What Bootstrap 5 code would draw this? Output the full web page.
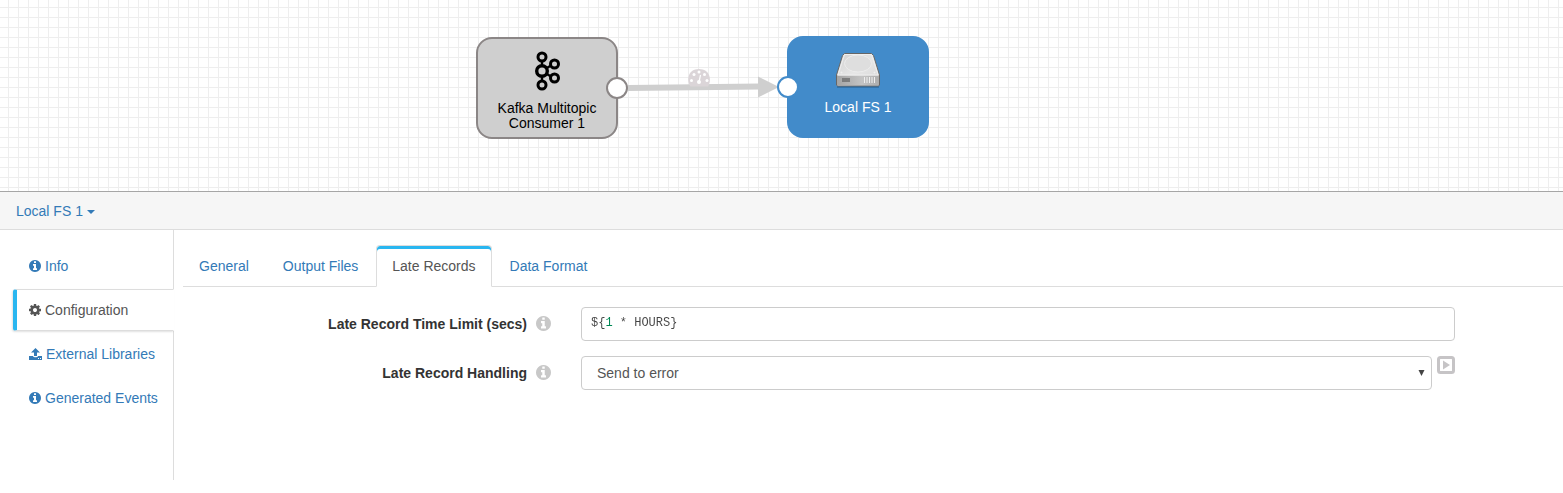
<!DOCTYPE html>
<html lang="en">
<head>
<meta charset="utf-8">
<meta name="viewport" content="width=device-width, initial-scale=1">
<title>Pipeline configuration</title>
<link href="https://cdn.jsdelivr.net/npm/bootstrap@5.3.0/dist/css/bootstrap.min.css" rel="stylesheet">
<style>
  body { font: 14px/20px "Liberation Sans", Arial, sans-serif; color: #333; background: #fff; }
  a { color: #337ab7; text-decoration: none; }

  /* Pipeline canvas */
  .canvas {
    height: 192px; border-bottom: 1px solid #a6a6a6;
    background-image: linear-gradient(90deg, #eee 1px, transparent 1px), linear-gradient(#eee 1px, transparent 1px);
    background-size: 10px 10px; background-position: 8px 7px;
  }
  .wire { left: 628px; top: 66px; }
  .stage { width: 142px; height: 102px; border-radius: 16px; border: 2px solid; line-height: 15px; padding: 12px 16px 0; font-size: 14px; }
  .stage svg { display: block; margin: 0 auto 10px; }
  .stage-kafka { left: 476px; top: 37px; background: #cfcfcf; border-color: #8b8686; color: #000; }
  .stage-fs { left: 787px; top: 36px; background: #428bca; border-color: #428bca; color: #fff; }
  .port { width: 22px; height: 22px; border-radius: 50%; background: #fff; border: 2px solid; border-color: inherit; top: 38px; }
  .port-out { right: -12px; }
  .port-in { left: -12px; }

  /* Detail pane */
  .pane-head { height: 38px; background: #f6f6f6; border-bottom: 1px solid #ddd; padding-left: 16px; }
  .pane-head .dropdown-toggle { color: #337ab7; font-size: 14px; line-height: 20px; }
  .pane-head .dropdown-toggle::after { margin-left: 4px; vertical-align: 2px; border-width: 4px 4px 0; }
  .pane-body { min-height: 250px; }
  .side { flex: 0 0 174px; padding: 15px 0 0 13px; box-shadow: inset -1px 0 #ddd; gap: 2px; }
  .side .nav-link { padding: 10px 12px; border: 1px solid transparent; border-left-width: 4px; color: #337ab7; white-space: nowrap; }
  .side .nav-link.active { color: #555; background: #fff; border-color: #ddd transparent #ddd #29b6f0; border-radius: 3px 0 0 3px; box-shadow: -1px 1px 2px rgba(0,0,0,.12); }
  .side svg { vertical-align: -1px; margin-right: 4px; }
  .content { padding-left: 9px; }
  .content .nav-tabs { margin-top: 15px; border-bottom: 1px solid #ddd; gap: 2px; }
  .content .nav-tabs .nav-link { padding: 10px 15px; border: 1px solid transparent; color: #337ab7; border-radius: 4px 4px 0 0; }
  .content .nav-tabs .nav-link.active { color: #555; border-color: #ddd #ddd #fff; box-shadow: inset 0 3px #29b6f0; }

  .settings { padding-top: 20px; display: grid; gap: 15px; }
  .setting { display: grid; grid-template-columns: 398fr 874fr 108fr; }
  .setting-name { padding-right: 30px; gap: 9px; }
  .hint { width: 15px; height: 15px; margin-bottom: 2px; color: #c8c8c8; }
  .settings .form-control, .settings .form-select { height: 34px; border: 1px solid #ccc; border-radius: 4px; font-size: 14px; line-height: 20px; }
  .settings .form-select {
    padding: 0 15px; color: #555; background-position: right 6px center; background-size: 7px 6px;
    background-image: url("data:image/svg+xml,%3Csvg xmlns='http://www.w3.org/2000/svg' viewBox='0 0 7 6'%3E%3Cpath fill='%23444' d='M.5 0h6L3.5 6z'/%3E%3C/svg%3E");
  }
  .choice { gap: 5px; }
  .editor { padding: 0 9px; }
  /* The third character is a number token */
  .editor input {
    width: 100%; height: 30px; padding: 0; border: 0; outline: 0;
    font: 12px/30px "Liberation Mono", monospace; color: transparent; caret-color: #333;
    background: linear-gradient(90deg, #444 2ch, #085 2ch 3ch, #444 3ch);
    -webkit-background-clip: text; background-clip: text;
  }
</style>
</head>
<body>
<svg class="d-none">
  <symbol id="i-info" viewBox="128 128 1536 1536"><path fill="currentColor" d="M1152 1376v-160q0-14-9-23t-23-9h-96v-512q0-14-9-23t-23-9h-320q-14 0-23 9t-9 23v160q0 14 9 23t23 9h96v320h-96q-14 0-23 9t-9 23v160q0 14 9 23t23 9h448q14 0 23-9t9-23zm-128-896v-160q0-14-9-23t-23-9h-192q-14 0-23 9t-9 23v160q0 14 9 23t23 9h192q14 0 23-9t9-23zm640 416q0 209-103 385.5t-279.5 279.5-385.5 103-385.5-103-279.5-279.5-103-385.5 103-385.5 279.5-279.5 385.5-103 385.5 103 279.5 279.5 103 385.5z"/></symbol>
</svg>

<main>
  <section class="canvas position-relative overflow-hidden" aria-label="Pipeline">
    <svg class="wire position-absolute" width="152" height="34" aria-hidden="true">
      <path d="M0 22 132 20.500" stroke="#cfcfcf" stroke-width="6"/>
      <path d="M130 10.500 151 21l-21 10.500z" fill="#cfcfcf"/>
      <path d="M62.500 20.500C58 14 60 3 71 3s13 11 9 17.500z" fill="#dbd5d8"/>
      <g fill="#fff"><circle cx="63.500" cy="14.500" r="1.500"/><circle cx="66" cy="8.500" r="1.500"/><circle cx="71" cy="6" r="1.500"/><circle cx="76.500" cy="8.500" r="1.500"/><circle cx="79" cy="14.500" r="1.500"/><circle cx="71" cy="16" r="2"/></g>
      <path d="M71 16l1.500-7" stroke="#fff" stroke-width="1.200"/>
    </svg>

    <div class="stage stage-kafka position-absolute text-center">
      <svg width="26" height="40" viewBox="0 0 26 40" fill="none" stroke="#000" aria-hidden="true">
        <path d="M8 10v5M8 25v5M12 17.500l5-3M12 22.500l5 3" stroke-width="2.400"/>
        <g stroke-width="3"><circle cx="8" cy="6" r="4"/><circle cx="8" cy="34" r="4"/><circle cx="20.500" cy="13" r="4"/><circle cx="20.500" cy="27" r="4"/></g>
        <circle cx="8" cy="20" r="5.300" stroke-width="3.400"/>
      </svg>
      <div>Kafka Multitopic Consumer 1</div>
      <span class="port port-out position-absolute"></span>
    </div>

    <div class="stage stage-fs position-absolute text-center">
      <svg width="46" height="40" viewBox="0 0 46 40" aria-hidden="true">
        <defs>
          <linearGradient id="lid" x1="0" y1="0" x2="1" y2="1"><stop stop-color="#d0d0d0"/><stop offset=".5" stop-color="#e6e6e6"/><stop offset="1" stop-color="#d6d6d6"/></linearGradient>
          <linearGradient id="front" x1="0" x2="1"><stop stop-color="#a4a4a4"/><stop offset=".6" stop-color="#c4c4c4"/><stop offset="1" stop-color="#adadad"/></linearGradient>
        </defs>
        <path d="M2 37h42" stroke="#235783" stroke-width="2" opacity=".45"/>
        <path d="M9.500 3.500h27l2 2L44.500 25v10l-1 1h-41l-1-1V25l6-19.500z" fill="url(#lid)" stroke="#666" stroke-linejoin="round"/>
        <path d="M2 25.500h42V35H2z" fill="url(#front)"/>
        <path d="M9.500 4.500h27l6.500 20.500H3z" fill="none" stroke="#efefef"/>
        <ellipse cx="23" cy="13.500" rx="13.500" ry="8.500" fill="#dedede" stroke="#ececec"/>
        <g fill="#efefef"><circle cx="6.500" cy="22.500" r="1"/><circle cx="39.500" cy="22.500" r="1"/></g>
        <path d="M7 28h8v4H7z" fill="#666" opacity=".7"/>
        <path d="M29.500 27v6m2.500-6v6m2.500-6v6m2.500-6v6m2.500-6v6" stroke="#eee"/>
      </svg>
      <div>Local FS 1</div>
      <span class="port port-in position-absolute"></span>
    </div>
  </section>

  <section aria-label="Stage details">
    <header class="pane-head d-flex align-items-center">
      <button type="button" class="btn p-0 border-0 dropdown-toggle" aria-expanded="false">Local FS 1</button>
    </header>

    <div class="pane-body d-flex">
      <nav class="side nav flex-column flex-nowrap" aria-label="Sections">
        <a class="nav-link" href="#info"><svg width="12" height="12"><use href="#i-info"/></svg>Info</a>
        <a class="nav-link active" href="#configuration" aria-current="page"><svg width="12" height="12" viewBox="128 128 1536 1536"><path fill="currentColor" d="M1152 896q0-106-75-181t-181-75-181 75-75 181 75 181 181 75 181-75 75-181zm512-109v222q0 12-8 23t-20 13l-185 28q-19 54-39 91 35 50 107 138 10 12 10 25t-9 23q-27 37-99 108t-94 71q-12 0-26-9l-138-108q-44 23-91 38-16 136-29 186-7 28-36 28h-222q-14 0-24.500-8.500t-11.500-21.500l-28-184q-49-16-90-37l-141 107q-10 9-25 9-14 0-25-11-126-114-165-168-7-10-7-23 0-12 8-23 15-21 51-66.500t54-70.500q-27-50-41-99l-183-27q-13-2-21-12.500t-8-23.500v-222q0-12 8-23t19-13l186-28q14-46 39-92-40-57-107-138-10-12-10-24 0-10 9-23 26-36 98.500-107.500t94.500-71.500q13 0 26 10l138 107q44-23 91-38 16-136 29-186 7-28 36-28h222q14 0 24.500 8.500t11.500 21.500l28 184q49 16 90 37l142-107q9-9 24-9 13 0 25 10 129 119 165 170 7 8 7 22 0 12-8 23-15 21-51 66.500t-54 70.500q26 50 41 98l183 28q13 2 21 12.500t8 23.500z"/></svg>Configuration</a>
        <a class="nav-link" href="#libraries"><svg width="13" height="12" viewBox="0 0 13 12"><path fill="currentColor" fill-rule="evenodd" d="M6.500 0 11 4.500H8V8H5V4.500H2zM0 8h4c.3.800 1 1.200 1.500 1.200h2C8 9.200 8.700 8.800 9 8h4v4H0zm9 2v1h1v-1zm2 0v1h1v-1z"/></svg>External Libraries</a>
        <a class="nav-link" href="#events"><svg width="12" height="12"><use href="#i-info"/></svg>Generated Events</a>
      </nav>

      <div class="content flex-grow-1">
        <nav class="nav nav-tabs" aria-label="Configuration groups">
          <a class="nav-link" href="#general">General</a>
          <a class="nav-link" href="#output">Output Files</a>
          <a class="nav-link active" href="#late" aria-current="page">Late Records</a>
          <a class="nav-link" href="#format">Data Format</a>
        </nav>

        <form class="settings">
          <div class="setting">
            <div class="setting-name d-flex justify-content-end align-items-center">
              <label class="fw-bold" for="limit">Late Record Time Limit (secs)</label>
              <svg class="hint"><use href="#i-info"/></svg>
            </div>
            <div class="form-control editor"><input id="limit" type="text" value="${1 * HOURS}" spellcheck="false"></div>
          </div>
          <div class="setting">
            <div class="setting-name d-flex justify-content-end align-items-center">
              <label class="fw-bold" for="handling">Late Record Handling</label>
              <svg class="hint"><use href="#i-info"/></svg>
            </div>
            <div class="choice d-flex align-items-start">
              <select class="form-select" id="handling"><option>Send to error</option><option>Send to late records file</option></select>
              <button type="button" class="btn p-0 border-0 d-flex" aria-label="Use an expression">
                <svg width="18" height="18" viewBox="0 0 18 18"><rect x="1.500" y="1.500" width="15" height="15" rx="2" fill="none" stroke="#c6c4c6" stroke-width="3"/><path d="M6 4.500 13 9l-7 4.500z" fill="#c6c4c6"/></svg>
              </button>
            </div>
          </div>
        </form>
      </div>
    </div>
  </section>
</main>
<script src="https://cdn.jsdelivr.net/npm/bootstrap@5.3.0/dist/js/bootstrap.bundle.min.js"></script>
</body>
</html>
